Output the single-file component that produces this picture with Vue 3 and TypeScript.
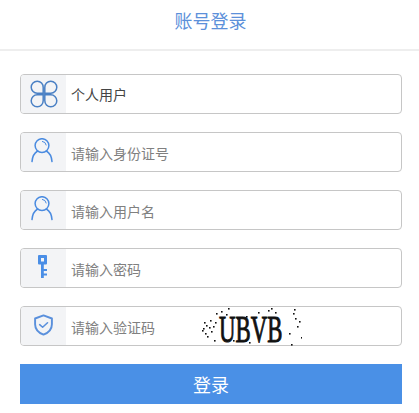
<script setup lang="ts">
const dots: [number, number][] = [
  [204,322],[206,325],[203,328],[205,333],[207,336],[202,330],[209,327],[211,331],[214,340],
  [216,313],[221,311],[226,314],[228,308],[237,318],[222,337],
  [233,340],[249,342],[258,312],[268,310],[271,308],[275,312],
  [294,309],[293,313],[295,318],[277,319],[289,333],[299,321],[297,326],[301,337],
  [291,344],[246,316],[215,322],[213,326],[210,320]
];
const rows = [
  { key: 'type', icon: 'clover', value: '个人用户', placeholder: '' },
  { key: 'id', icon: 'user', value: '', placeholder: '请输入身份证号' },
  { key: 'name', icon: 'user', value: '', placeholder: '请输入用户名' },
  { key: 'pwd', icon: 'key', value: '', placeholder: '请输入密码' },
  { key: 'code', icon: 'shield', value: '', placeholder: '请输入验证码' }
];
</script>

<template>
  <div class="page">
    <header class="head">账号登录</header>
    <form class="form" @submit.prevent>
      <div v-for="r in rows" :key="r.key" class="row">
        <span class="ico">
          <svg v-if="r.icon === 'clover'" width="28" height="28" viewBox="0 0 28 28" fill="none" stroke="#4a80c4" stroke-width="1.5">
            <path d="M13.2 13.2H7.4A6 6 0 1 1 13.2 7.4Z" />
            <path d="M14.8 13.2h5.8A6 6 0 1 0 14.8 7.4Z" />
            <path d="M13.2 14.8H7.4A6 6 0 1 0 13.2 20.6Z" />
            <path d="M14.8 14.8h5.8A6 6 0 1 1 14.8 20.6Z" />
          </svg>
          <svg v-else-if="r.icon === 'user'" class="up" width="22" height="25" viewBox="0 0 22 25" fill="none" stroke="#4a8be0" stroke-width="1.5" stroke-linecap="round">
            <circle cx="11" cy="7.6" r="6.9" />
            <path d="M6.6 13C3.2 15 1.4 18.4 1 23.6" />
            <path d="M15.4 13C18.8 15 20.6 18.4 21 23.6" />
            <path d="M11.4 3.4A4.2 4.2 0 0 1 15.2 7" stroke-width="1" />
          </svg>
          <svg v-else-if="r.icon === 'key'" class="key" width="9" height="23" viewBox="0 0 9 23" fill="#4a8ee6">
            <path fill-rule="evenodd" d="M1 0H8A1 1 0 0 1 9 1V8.6A1 1 0 0 1 8 9.6H5.8V14H9V16H5.8V18.4H9V20.4H5.8V23H3V9.6H1A1 1 0 0 1 0 8.6V1A1 1 0 0 1 1 0ZM3 3V6.4H6V3Z" />
          </svg>
          <svg v-else class="shield" width="21" height="24" viewBox="0 0 24 26" fill="none" stroke="#5a90dc" stroke-width="2.2" stroke-linejoin="round" stroke-linecap="round">
            <path d="M12 2 21.6 5.6V12c0 6-3.6 9.6-9.6 12C6 21.6 2.4 18 2.4 12V5.6Z" />
            <path d="M7.6 12.6 11 15.6 16.6 10.4" stroke-width="1.8" />
          </svg>
        </span>
        <span v-if="r.value" class="val">{{ r.value }}</span>
        <span v-else class="ph">{{ r.placeholder }}</span>
        <span v-if="r.key === 'code'" class="captcha">
          <svg class="noise" width="102" height="40" viewBox="200 306 102 40">
            <rect v-for="(d, i) in dots" :key="i" :x="d[0]" :y="d[1]" width="1.6" height="1.6" fill="#111" />
          </svg>
          <span class="code">UBVB</span>
        </span>
      </div>
      <button class="btn" type="submit">登录</button>
    </form>
  </div>
</template>

<style scoped>
.page {
  width: 419px;
  height: 413px;
  background: #fff;
  font-family: "Noto Sans CJK SC", "Liberation Sans", sans-serif;
  overflow: hidden;
}
.head {
  border-bottom: 2px solid #eeeeee;
  display: flex;
  align-items: center;
  justify-content: center;
  box-sizing: border-box;
  height: 51px;
  padding: 0 0 10px 2px;
  font-size: 18px;
  color: #5c90da;
}
.form {
  padding: 23px 17px 0 20px;
  display: flex;
  flex-direction: column;
  gap: 18px;
}
.row {
  position: relative;
  height: 40px;
  box-sizing: border-box;
  border: 1px solid #c6c6c6;
  border-radius: 4px;
  display: flex;
  align-items: center;
}
.ico {
  width: 45px;
  height: 100%;
  flex: none;
  background: #f3f4f6;
  border-radius: 3px 0 0 3px;
  display: flex;
  align-items: center;
  justify-content: center;
  margin-right: 5px;
}
.up {
  margin: 0 4px 3px 0;
}
.key {
  margin: 0 2px 3px 0;
}
.shield {
  margin-bottom: 3px;
}
.val {
  font-size: 14px;
  color: #444;
}
.ph {
  font-size: 14px;
  color: #808080;
  padding-top: 2px;
}
.captcha {
  position: absolute;
  left: 179px;
  top: -1px;
  width: 102px;
  height: 40px;
  display: flex;
  align-items: center;
  justify-content: center;
}
.noise {
  position: absolute;
  inset: 0;
}
.code {
  font-family: "Liberation Serif", serif;
  font-size: 38px;
  font-weight: 400;
  -webkit-text-stroke: 1px #111;
  color: #111;
  line-height: 30px;
  transform: translateY(3px) scaleX(0.6);
}
.btn {
  height: 40px;
  border: 0;
  background: #4a90e6;
  color: #fff;
  font-family: inherit;
  font-size: 18px;
  padding: 0;
}
</style>
